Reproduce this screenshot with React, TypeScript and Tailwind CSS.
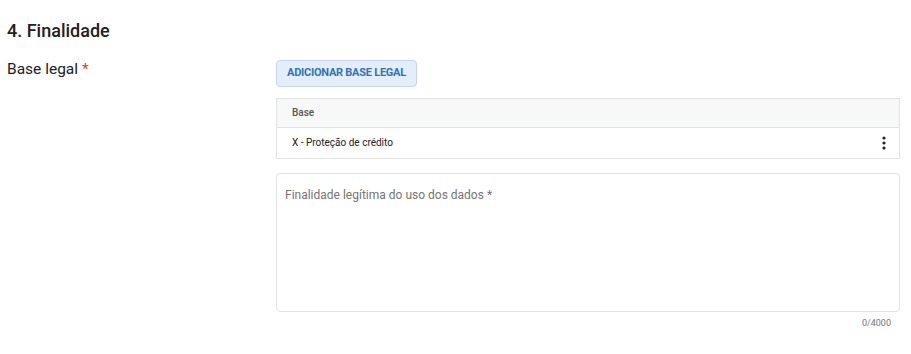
export default function App() {
  return (
    <div className="w-[911px] h-[354px] bg-white font-['Roboto',sans-serif] text-[#212121] pl-[7px] pr-[12px]">
      <div className="pt-[19px] h-[48px] text-[18px] leading-[24px] font-medium">4. Finalidade</div>
      <div className="flex pt-[11px]">
        <div className="w-[269px] shrink-0 text-[15.5px] leading-[20px]">
          Base legal <span className="text-[#e53935]">*</span>
        </div>
        <div className="flex-1 flex flex-col">
          <div>
            <button className="h-[27px] w-[141px] rounded-[4px] border border-[#c8d6e5] bg-[#e3eefa] text-[#2f74b9] text-[11px] font-bold tracking-[-0.25px] uppercase">
              Adicionar base legal
            </button>
          </div>
          <div className="mt-[11px] border border-[#e3e3e3] w-[624px]">
            <div className="h-[29px] bg-[#f7f8f8] border-b border-[#e3e3e3] flex items-center px-[15px] text-[10px] font-medium text-[#555]">
              Base
            </div>
            <div className="h-[30px] flex items-center justify-between px-[15px] text-[10px] text-[#212121]">
              <span>X - Proteção de crédito</span>
              <svg width="4" height="14" viewBox="0 0 4 14" className="mr-[-2px]">
                <circle cx="2" cy="2" r="1.6" fill="#222" />
                <circle cx="2" cy="7" r="1.6" fill="#222" />
                <circle cx="2" cy="12" r="1.6" fill="#222" />
              </svg>
            </div>
          </div>
          <div className="mt-[14px] w-[624px] h-[139px] border border-[#e3e3e3] rounded-[4px] px-[8px] pt-[12px] text-[12px] text-[#757575]">
            Finalidade legítima do uso dos dados *
          </div>
          <div className="w-[615px] text-right text-[9px] text-[#757575] pt-[5px]">0/4000</div>
        </div>
      </div>
    </div>
  );
}
